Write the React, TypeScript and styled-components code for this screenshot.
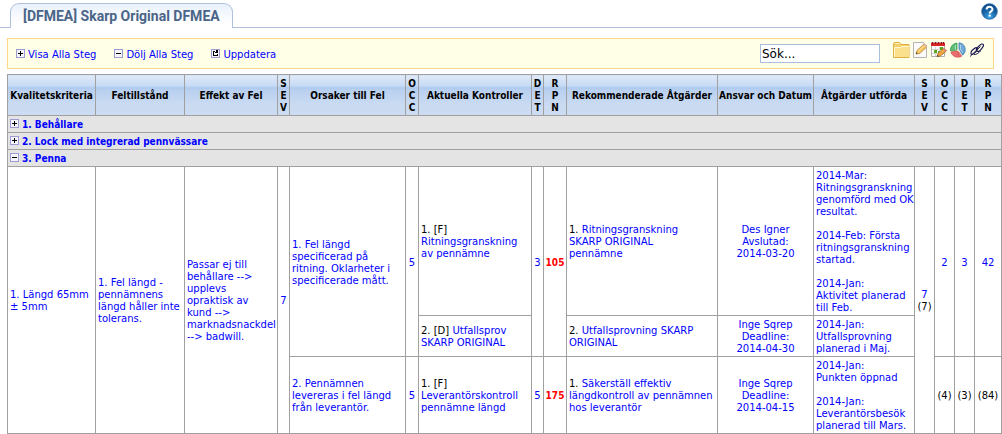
import React, { useState } from "react";
import styled, { createGlobalStyle, css } from "styled-components";

const GlobalStyle = createGlobalStyle`
  * { box-sizing: border-box; }
  body {
    margin: 0;
    background: #fff;
    color: #000;
    font: 10px/12px "DejaVu Sans", Verdana, sans-serif;
  }
`;

const Page = styled.main`
  display: flex;
  flex-direction: column;
  padding-top: 3px;
`;

const TabBar = styled.header`
  display: flex;
  justify-content: space-between;
  align-items: flex-start;
  padding: 0 4px 0 10px;
  height: 25px;
  border-bottom: 1px solid #afc1dc;
`;

const Tab = styled.h1`
  margin: 0;
  height: 25px;
  padding: 0 12px;
  border: 1px solid #afc1dc;
  border-bottom: 0;
  border-radius: 9px 9px 0 0;
  background: linear-gradient(#e9f1fc, #fff 80%);
  color: #4a6587;
  font: bold 14px/25px Roboto, "Liberation Sans", Arial, sans-serif;
  white-space: nowrap;
`;

const IconButton = styled.button`
  display: flex;
  padding: 0;
  border: 0;
  background: none;
  cursor: pointer;
`;

const Toolbar = styled.div`
  display: flex;
  align-items: flex-start;
  justify-content: space-between;
  margin: 10px 8px 5px 7px;
  padding: 3px 8px 5px;
  height: 31px;
  border: 1px solid #ffd78a;
  background: #ffffe7;
`;

const Actions = styled.nav`
  display: flex;
  gap: 18px;
  padding-top: 7px;
`;

const ActionLink = styled.a`
  display: flex;
  align-items: flex-start;
  gap: 3px;
  color: #00f;
  text-decoration: none;
`;

const Tools = styled.div`
  display: flex;
  align-items: flex-start;
`;

const Search = styled.input`
  width: 120px;
  height: 19px;
  margin: 2px 13px 0 0;
  padding: 1px 1px 0;
  border: 1px solid #a9bfdf;
  border-radius: 0;
  background: #fff;
  color: #000;
  font: 12px/16px "DejaVu Sans", Verdana, sans-serif;
`;

const IconRow = styled.div`
  display: flex;
  gap: 3px;
`;

const Grid = styled.table`
  width: calc(100% - 7px);
  margin-left: 7px;
  border-collapse: collapse;
  table-layout: fixed;
`;

const Col = styled.col<{ $w: number }>`
  width: ${(p) => p.$w}px;
`;

const cell = css`
  padding: 3px 2px 1px;
  border: 1px solid #a0a0a0;
`;

const Head = styled.th`
  ${cell}
  padding: 3px 0 1px;
  background: linear-gradient(#dfeaf8 0, #c5daf3 11px, #a9c8ee 12px, #b8cfef 14px, #c9daf2 28px, #cddcf2 100%);
  font: bold 10px/12px "DejaVu Sans Condensed", "DejaVu Sans", Tahoma, sans-serif;
  white-space: pre;
`;

const GroupCell = styled.td`
  ${cell}
  background: #e4e4e4;
`;

const GroupTitle = styled.div`
  display: flex;
  align-items: flex-start;
  gap: 3px;
  font: bold 10px/12px "DejaVu Sans Condensed", "DejaVu Sans", Tahoma, sans-serif;
`;

const Cell = styled.td<{ $center?: boolean }>`
  ${cell}
  text-align: ${(p) => (p.$center ? "center" : "left")};
  vertical-align: middle;
  white-space: pre;
  ${(p) => p.$center && "padding: 3px 0 1px;"}
`;

const TextLink = styled.a`
  color: #00f;
  text-decoration: none;
`;

const Risk = styled.strong`
  color: #f00;
  font-family: "DejaVu Sans Condensed", "DejaVu Sans", Tahoma, sans-serif;
`;

const Box = ({ kind }: { kind: "plus" | "minus" | "refresh" }) => (
  <svg width="9" height="9" viewBox="0 0 9 9" aria-hidden="true" shapeRendering="crispEdges">
    <path d="M0 0h9v9H0z" fill="#9c9cd2" />
    <path d="M1 1h7v7H1z" fill="#f4f4fa" />
    {kind !== "refresh" && <path d="M2 4h5v1H2z" fill="#000" />}
    {kind === "plus" && <path d="M4 2h1v5H4z" fill="#000" />}
    {kind === "refresh" && <path d="M2 2h2v1h1V1h2v3H4V3H3v3h3V5h1v2H2z" fill="#000" />}
  </svg>
);

const HelpIcon = () => (
  <svg width="17" height="17" viewBox="0 0 17 17" aria-hidden="true">
    <defs>
      <radialGradient id="help" cx=".5" cy=".85" r=".8">
        <stop offset="0" stopColor="#39a5ea" />
        <stop offset=".6" stopColor="#17609f" />
        <stop offset="1" stopColor="#0c478a" />
      </radialGradient>
    </defs>
    <circle cx="8.5" cy="8.5" r="7.8" fill="url(#help)" stroke="#2467a6" strokeWidth=".8" />
    <path d="M5.6 6.6C5.6 2.9 11.5 3 11.5 6.3c0 2.1-2.8 2-2.8 4.1" fill="none" stroke="#fff" strokeWidth="2" />
    <rect x="7.6" y="11.6" width="2.2" height="2" fill="#fff" />
  </svg>
);

const FolderIcon = () => (
  <svg width="17" height="16" viewBox="0 0 17 16" aria-hidden="true">
    <path d="M.5 15.500V1.500l1-1h5l1.500 2h8v13z" fill="#f5cf6a" stroke="#e0ae42" />
    <path d="M1 5h6.500L9 4h7v11H1z" fill="#fadf8c" />
    <path d="M2 1.500h4.500" stroke="#fff3c6" />
    <path d="M1.500 15V5.500h6L9 4.500h7" fill="none" stroke="#fff5ce" />
  </svg>
);

const EditIcon = () => (
  <svg width="15" height="16" viewBox="0 0 15 16" aria-hidden="true">
    <path d="M.5.500h10l3 3v12H.5z" fill="#fbfbfb" stroke="#b5b5b5" />
    <path d="M10.500.500v3h3" fill="#e8e8e8" stroke="#c8c8c8" />
    <path d="m3 12 1-3.500 7-6.500 3 2.800-7.300 6.700z" fill="#f6c65c" stroke="#b98432" strokeWidth=".8" />
    <path d="m5 9.500 7-6.500" stroke="#ffeaa8" />
    <path d="m10 3 1.200-1.300 3 2.800L13 5.800z" fill="#eab4a0" />
    <path d="m3 12 .5-1.700 1.200 1.200z" fill="#333" />
  </svg>
);

const CalendarIcon = () => (
  <svg width="16" height="16" viewBox="0 0 16 16" aria-hidden="true">
    <path d="M.5.500h13v14H.5z" fill="#fff" stroke="#b0b0b0" />
    <path d="M0 1h14v3H0z" fill="#da2525" />
    <path d="M1 0h1v2H1zM4 0h1v2H4zM7 0h1v2H7zM10 0h1v2h-1zM12 0h1v2h-1z" fill="#971414" />
    <path d="M1 7.500h12M1 11.500h12M4.500 5v9M8.500 5v9M11.500 5v5" stroke="#d4d4d4" />
    <path d="M3 8h3v3H3zM9 5h3v3H9zM7 9h2v2H7z" fill="#57a81d" />
    <path d="m6 14.500 1-3.200 5.500-5 3 2.500L9.500 14z" fill="#eea745" stroke="#a26421" strokeWidth=".8" />
    <path d="m11.500 7.200 1.500-1.300 2.700 2.400-1.300 1.300z" fill="#d6847b" />
    <path d="m6 14.500.5-1.500 1.500 1.200z" fill="#333" />
  </svg>
);

const PieIcon = () => (
  <svg width="16" height="16" viewBox="0 0 16 16" aria-hidden="true">
    <path d="M7 8V1a7 7 0 0 0-6.500 8z" fill="#60bd75" stroke="#389c52" strokeWidth=".8" />
    <path d="M9 7V.8A7 7 0 0 1 12.700 13.200z" fill="#71a8d8" stroke="#3d7db7" strokeWidth=".8" />
    <path d="M7.500 9 1 10a7 7 0 0 0 6.500 5.200zM8.500 9.500v5.700a7 7 0 0 0 3.200-1z" fill="#e97070" stroke="#d24747" strokeWidth=".7" />
    <path d="M10.500 3v4.500l2 3" fill="none" stroke="#b6d6ef" />
    <path d="M5.500 3v5" stroke="#a2deb0" />
  </svg>
);

const ClipIcon = () => (
  <svg width="16" height="16" viewBox="0 0 16 16" fill="none" stroke="#191950" aria-hidden="true">
    <path d="m7.500 6.500 3.700-3.700c1-1 3.500-1.300 3.300.6-.1 1.500-3.500 5.500-5 6-1.700.5-2.500-1.200-2-2.900z" strokeWidth="1.200" />
    <path d="m3 8.500 3-2.500c1.500-1 3 .2 2.200 1.800-.7 1.600-3.700 4.500-5 4.700-1.700.2-1.500-2.600-.2-4z" strokeWidth="1.200" />
    <path d="m1 14.500 10.500-10M5 12.500c1.500.5 5-1.500 6.500-3.500" />
  </svg>
);

const columns: [string, number][] = [
  ["Kvalitetskriteria", 88],
  ["Feltillstånd", 89],
  ["Effekt av Fel", 93],
  ["S\nE\nV", 12],
  ["Orsaker till Fel", 116],
  ["O\nC\nC", 13],
  ["Aktuella Kontroller", 113],
  ["D\nE\nT", 12],
  ["R\nP\nN", 23],
  ["Rekommenderade Åtgärder", 151],
  ["Ansvar och Datum", 96],
  ["Åtgärder utförda", 101],
  ["S\nE\nV", 20],
  ["O\nC\nC", 20],
  ["D\nE\nT", 20],
  ["R\nP\nN", 27],
];

const Link = ({ children }: { children: React.ReactNode }) => <TextLink href="#">{children}</TextLink>;

const tools = [
  { label: "Mapp", Icon: FolderIcon },
  { label: "Redigera", Icon: EditIcon },
  { label: "Kalender", Icon: CalendarIcon },
  { label: "Diagram", Icon: PieIcon },
  { label: "Länk", Icon: ClipIcon },
];

function GroupRow({ title, open, onToggle }: { title: string; open: boolean; onToggle?: () => void }) {
  return (
    <tr>
      <GroupCell colSpan={columns.length}>
        <GroupTitle>
          <IconButton type="button" aria-label={title} aria-expanded={open} onClick={onToggle}>
            <Box kind={open ? "minus" : "plus"} />
          </IconButton>
          <Link>{title}</Link>
        </GroupTitle>
      </GroupCell>
    </tr>
  );
}

function PennaRows() {
  return (
    <>
      <tr>
        <Cell rowSpan={3}><Link>{"1. Längd 65mm\n± 5mm"}</Link></Cell>
        <Cell rowSpan={3}><Link>{"1. Fel längd -\npennämnens\nlängd håller inte\ntolerans."}</Link></Cell>
        <Cell rowSpan={3}>
          <Link>{"Passar ej till\nbehållare -->\nupplevs\nopraktisk av\nkund -->\nmarknadsnackdel\n--> badwill."}</Link>
        </Cell>
        <Cell rowSpan={3} $center><Link>7</Link></Cell>
        <Cell rowSpan={2}><Link>{"1. Fel längd\nspecificerad på\nritning. Oklarheter i\nspecificerade mått."}</Link></Cell>
        <Cell rowSpan={2} $center><Link>5</Link></Cell>
        <Cell>{"1. [F]\n"}<Link>{"Ritningsgranskning\nav pennämne"}</Link></Cell>
        <Cell rowSpan={2} $center><Link>3</Link></Cell>
        <Cell rowSpan={2} $center><Risk>105</Risk></Cell>
        <Cell>{"1. "}<Link>{"Ritningsgranskning\nSKARP ORIGINAL\npennämne"}</Link></Cell>
        <Cell $center><Link>{"Des Igner\nAvslutad:\n2014-03-20"}</Link></Cell>
        <Cell>
          <Link>
            {"2014-Mar:\nRitningsgranskning\ngenomförd med OK\nresultat.\n\n2014-Feb: Första\nritningsgranskning\nstartad.\n\n2014-Jan:\nAktivitet planerad\ntill Feb."}
          </Link>
        </Cell>
        <Cell rowSpan={3} $center><Link>7</Link>{"\n(7)"}</Cell>
        <Cell rowSpan={2} $center><Link>2</Link></Cell>
        <Cell rowSpan={2} $center><Link>3</Link></Cell>
        <Cell rowSpan={2} $center><Link>42</Link></Cell>
      </tr>
      <tr>
        <Cell>{"2. [D] "}<Link>{"Utfallsprov\nSKARP ORIGINAL"}</Link></Cell>
        <Cell>{"2. "}<Link>{"Utfallsprovning SKARP\nORIGINAL"}</Link></Cell>
        <Cell $center><Link>{"Inge Sqrep\nDeadline:\n2014-04-30"}</Link></Cell>
        <Cell><Link>{"2014-Jan:\nUtfallsprovning\nplanerad i Maj."}</Link></Cell>
      </tr>
      <tr>
        <Cell><Link>{"2. Pennämnen\nlevereras i fel längd\nfrån leverantör."}</Link></Cell>
        <Cell $center><Link>5</Link></Cell>
        <Cell>{"1. [F]\n"}<Link>{"Leverantörskontroll\npennämne längd"}</Link></Cell>
        <Cell $center><Link>5</Link></Cell>
        <Cell $center><Risk>175</Risk></Cell>
        <Cell>{"1. "}<Link>{"Säkerställ effektiv\nlängdkontroll av pennämnen\nhos leverantör"}</Link></Cell>
        <Cell $center><Link>{"Inge Sqrep\nDeadline:\n2014-04-15"}</Link></Cell>
        <Cell><Link>{"2014-Jan:\nPunkten öppnad\n\n2014-Jan:\nLeverantörsbesök\nplanerad till Mars."}</Link></Cell>
        <Cell $center>(4)</Cell>
        <Cell $center>(3)</Cell>
        <Cell $center>(84)</Cell>
      </tr>
    </>
  );
}

export default function App() {
  const [open, setOpen] = useState(true);
  return (
    <Page>
      <GlobalStyle />
      <TabBar>
        <Tab>[DFMEA] Skarp Original DFMEA</Tab>
        <IconButton type="button" aria-label="Hjälp"><HelpIcon /></IconButton>
      </TabBar>
      <Toolbar>
        <Actions>
          <ActionLink href="#"><Box kind="plus" />Visa Alla Steg</ActionLink>
          <ActionLink href="#"><Box kind="minus" />Dölj Alla Steg</ActionLink>
          <ActionLink href="#"><Box kind="refresh" />Uppdatera</ActionLink>
        </Actions>
        <Tools>
          <Search type="text" aria-label="Sök" defaultValue="Sök..." />
          <IconRow>
            {tools.map(({ label, Icon }) => (
              <IconButton key={label} type="button" aria-label={label}><Icon /></IconButton>
            ))}
          </IconRow>
        </Tools>
      </Toolbar>
      <Grid>
        <colgroup>
          {columns.map(([, w], i) => <Col key={i} $w={w} />)}
        </colgroup>
        <thead>
          <tr>{columns.map(([label], i) => <Head key={i} scope="col">{label}</Head>)}</tr>
        </thead>
        <tbody>
          <GroupRow title="1. Behållare" open={false} />
          <GroupRow title="2. Lock med integrerad pennvässare" open={false} />
          <GroupRow title="3. Penna" open={open} onToggle={() => setOpen(!open)} />
          {open && <PennaRows />}
        </tbody>
      </Grid>
    </Page>
  );
}
